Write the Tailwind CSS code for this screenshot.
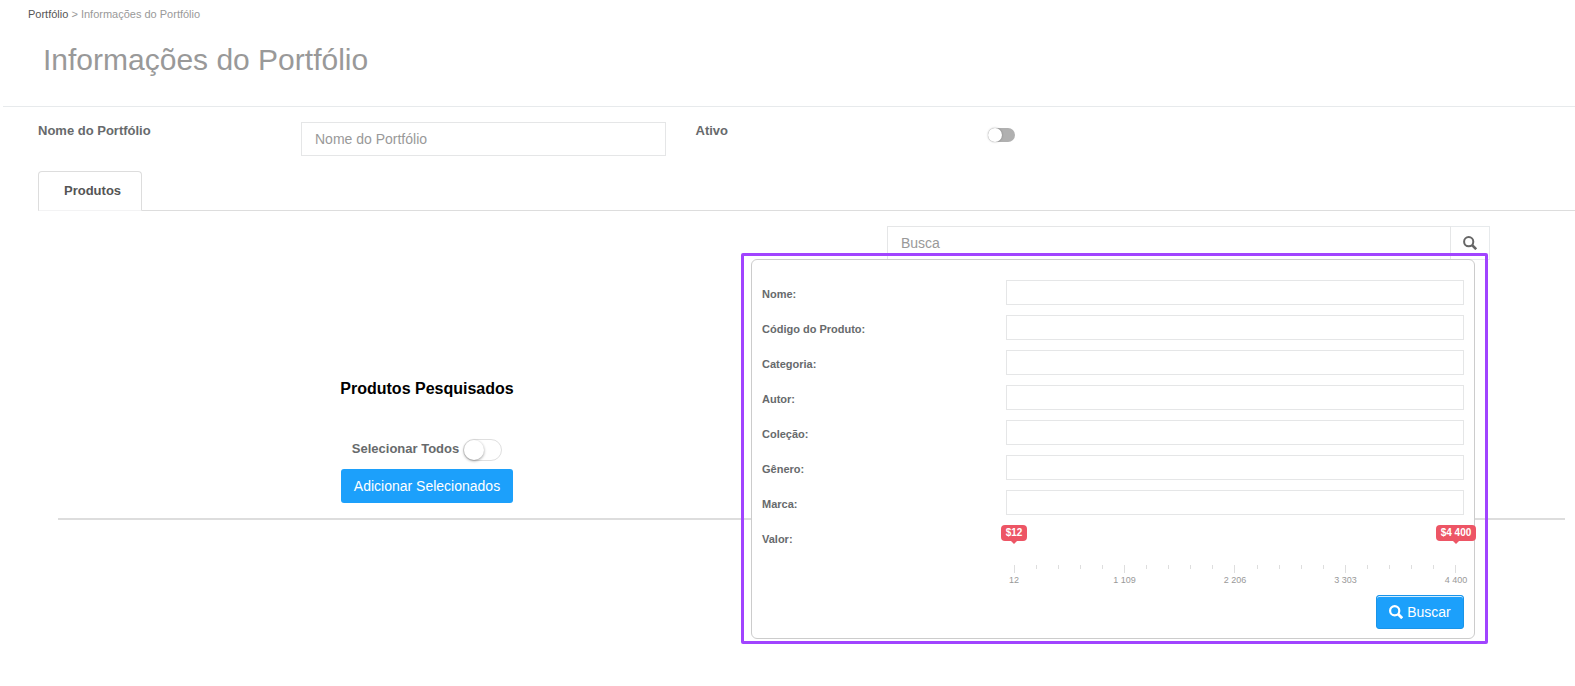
<!DOCTYPE html>
<html lang="pt-BR">
  <head>
    <meta charset="UTF-8" />
    <meta name="viewport" content="width=device-width, initial-scale=1.0" />
    <title>Informações do Portfólio</title>
    <script src="https://cdn.jsdelivr.net/npm/@tailwindcss/browser@4"></script>
  </head>

  <body class="min-h-screen overflow-x-hidden bg-white font-['Liberation_Sans',Arial,sans-serif] text-[13px] text-[#676a6c]">
    <header class="ml-[3px] border-b border-[#e7eaec] pb-[26px]">
      <nav class="pt-1 pl-[25px] text-[11px] leading-5 text-[#999]">
        <a href="#" class="text-[#555]">Portfólio</a> &gt; Informações do Portfólio
      </nav>
      <h1 class="mt-4 pl-10 text-[30px] leading-10 text-[#999]">Informações do Portfólio</h1>
    </header>

    <main class="pl-[23px]">
      <div class="-mr-[26px] grid grid-cols-12 pt-[15px]">
        <label for="portfolioName" class="col-span-2 pl-[15px] leading-[18px] font-bold">Nome do Portfólio</label>
        <div class="col-span-3 px-[15px]">
          <input
            type="text"
            id="portfolioName"
            class="h-[34px] w-full border border-[#e5e6e7] px-[13px] text-[14px] placeholder:text-[#999]"
            placeholder="Nome do Portfólio"
          />
        </div>
        <label for="active" class="col-span-2 pl-[15px] leading-[18px] font-bold">Ativo</label>
        <div class="col-span-3 pt-1.5 pl-[44px]">
          <input
            type="checkbox"
            id="active"
            class="block h-[14px] w-[27px] appearance-none rounded-full bg-[#b0b0b0] before:block before:size-[14px] before:rounded-full before:bg-white before:shadow-[0_0_2px_rgba(0,0,0,0.35)] checked:bg-[#1ca0fb] checked:before:ml-[13px]"
          />
        </div>
      </div>

      <div role="tablist" class="mt-[15px] ml-[15px] flex border-b border-[#ddd]">
        <button
          role="tab"
          aria-selected="true"
          class="-mb-px h-10 rounded-t border border-[#ddd] border-b-[#f3f3f4] bg-white pr-5 pl-[25px] font-bold text-[#555]"
        >
          Produtos
        </button>
      </div>

      <div class="flex justify-end pt-[15px] pr-[85px]">
        <div class="relative flex h-[34px] w-[603px]">
          <input
            type="text"
            aria-label="Busca"
            class="min-w-0 flex-1 border border-[#e5e6e7] px-[13px] text-[14px] placeholder:text-[#999]"
            placeholder="Busca"
          />
          <button aria-label="Buscar" class="flex w-[39px] items-center justify-center border border-l-0 border-[#e7eaec] bg-white">
            <svg class="size-[14px]" viewBox="0 0 14 14" fill="none" stroke="#666" stroke-width="2">
              <circle cx="5.7" cy="5.7" r="4.6" />
              <path d="M9 9l4.2 4.2" stroke-width="2.6" />
            </svg>
          </button>

          <!-- advanced search -->
          <form class="absolute top-[33px] right-[15px] w-[724px] rounded-md border border-[#ccc] bg-white px-2.5 pt-5 pb-[9px] text-[11px]">
            <div class="grid grid-cols-[244px_1fr] gap-y-2.5 leading-5 font-bold">
              <label for="name" class="pt-1">Nome:</label>
              <input type="text" id="name" class="h-[25px] border border-[#e5e6e7] px-2" />
              <label for="code" class="pt-1">Código do Produto:</label>
              <input type="text" id="code" class="h-[25px] border border-[#e5e6e7] px-2" />
              <label for="category" class="pt-1">Categoria:</label>
              <input type="text" id="category" class="h-[25px] border border-[#e5e6e7] px-2" />
              <label for="author" class="pt-1">Autor:</label>
              <input type="text" id="author" class="h-[25px] border border-[#e5e6e7] px-2" />
              <label for="collection" class="pt-1">Coleção:</label>
              <input type="text" id="collection" class="h-[25px] border border-[#e5e6e7] px-2" />
              <label for="genre" class="pt-1">Gênero:</label>
              <input type="text" id="genre" class="h-[25px] border border-[#e5e6e7] px-2" />
              <label for="brand" class="pt-1">Marca:</label>
              <input type="text" id="brand" class="h-[25px] border border-[#e5e6e7] px-2" />

              <label for="minValue" class="pt-1">Valor:</label>
              <div class="relative h-[70px] px-2 font-normal">
                <div class="flex h-10 justify-between text-[10px] leading-4 font-bold text-white">
                  <div class="flex w-0 flex-col items-center">
                    <output for="minValue" class="rounded bg-[#ed5565] px-[5px] whitespace-nowrap">$12</output>
                    <span class="border-x-3 border-t-3 border-transparent border-t-[#ed5565]"></span>
                  </div>
                  <div class="flex w-0 flex-col items-center">
                    <output for="maxValue" class="rounded bg-[#ed5565] px-[5px] whitespace-nowrap">$4 400</output>
                    <span class="border-x-3 border-t-3 border-transparent border-t-[#ed5565]"></span>
                  </div>
                </div>
                <input type="range" id="minValue" min="12" max="4400" value="12" class="absolute top-5 left-0 w-1/2 opacity-0" />
                <input type="range" id="maxValue" aria-label="Valor máximo" min="12" max="4400" value="4400" class="absolute top-5 right-0 w-1/2 opacity-0" />
                <div id="ticks" class="flex h-2 justify-between"></div>
                <div class="flex justify-between text-[9px] leading-[14px] text-[#999]">
                  <span class="flex w-0 justify-center whitespace-nowrap">12</span>
                  <span class="flex w-0 justify-center whitespace-nowrap">1 109</span>
                  <span class="flex w-0 justify-center whitespace-nowrap">2 206</span>
                  <span class="flex w-0 justify-center whitespace-nowrap">3 303</span>
                  <span class="flex w-0 justify-center whitespace-nowrap">4 400</span>
                </div>
              </div>
            </div>
            <button
              type="button"
              class="ml-auto flex h-[34px] w-[88px] items-center justify-center gap-1 rounded-[3px] border border-[#1a94e8] bg-[#1ca0fb] text-[14px] text-white shadow-[inset_0_1px_0_rgba(255,255,255,0.8)]"
            >
              <svg class="size-[14px]" viewBox="0 0 14 14" fill="none" stroke="currentColor" stroke-width="2.2">
                <circle cx="5.7" cy="5.7" r="4.6" />
                <path d="M9 9l4.2 4.2" stroke-width="2.8" />
              </svg>
              Buscar
            </button>
          </form>
          <div class="pointer-events-none absolute top-[27px] right-[2px] h-[391px] w-[747px] rounded-[2px] border-3 border-[#a144ff]"></div>
        </div>
      </div>

      <section class="-mr-1 ml-5 flex">
        <div class="flex w-1/2 flex-col items-center pt-[119px] pb-[15px]">
          <h2 class="text-[16px] leading-5 font-bold text-black">Produtos Pesquisados</h2>
          <div class="mt-10 flex h-[22px] items-start gap-1">
            <label for="selectAll" class="leading-5 font-bold">Selecionar Todos</label>
            <input
              type="checkbox"
              id="selectAll"
              class="h-[22px] w-[39px] appearance-none rounded-full border border-[#dfdfdf] bg-white before:block before:size-5 before:rounded-full before:bg-white before:shadow-[0_1px_3px_rgba(0,0,0,0.4)] checked:bg-[#1ca0fb] checked:before:ml-[17px]"
            />
          </div>
          <button class="mt-2 h-[34px] rounded-[3px] bg-[#1ca0fb] px-[13px] text-[14px] text-white">
            Adicionar Selecionados
          </button>
        </div>
      </section>
      <hr class="mr-2.5 ml-[35px] border-t-2 border-[#ddd]" />
    </main>

    <script>
      const ticks = document.getElementById("ticks");
      for (let i = 0; i <= 20; i++) {
        const tick = document.createElement("span");
        tick.className = i % 5 === 0 ? "h-2 w-px bg-[#dedede]" : "h-1 w-px bg-[#dedede]";
        ticks.appendChild(tick);
      }
    </script>
  </body>
</html>
